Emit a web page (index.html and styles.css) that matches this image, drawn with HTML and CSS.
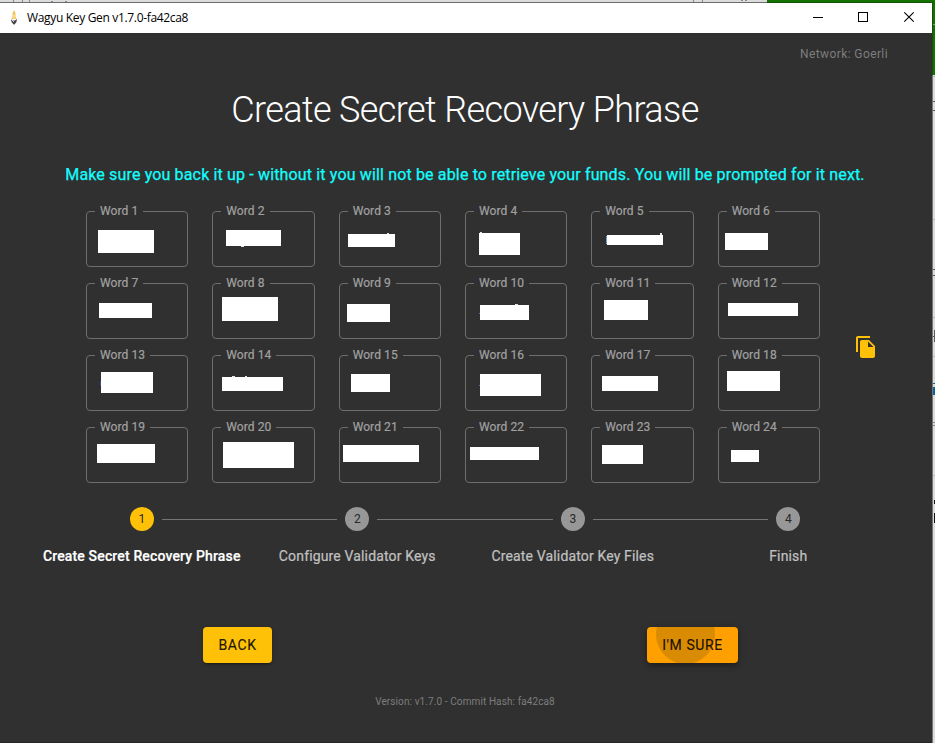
FILE: index.html
```html
<!DOCTYPE html>
<html lang="en">
<head>
<meta charset="utf-8">
<title>Wagyu Key Gen</title>
<link rel="stylesheet" href="styles.css">
</head>
<body>
<div class="desktop">
  <svg class="backdrop" width="935" height="743" viewBox="0 0 935 743" shape-rendering="crispEdges">
    <rect width="935" height="743" fill="#dcdcdc"/>
    <path d="M13.5 0v2M22.5 0v2M29.5 0v2M51 1.5h2M65 1.5h2M693.5 0v2M702.5 0v2M741 .5h2M745 .5h2" stroke="#888"/>
    <rect x="767" width="168" height="75" fill="#137200"/>
    <path d="M933 24.5h2" stroke="#72a965"/>
    <path d="M933 76.5h2M933 219.5h2M933 317.5h2M933 356.5h2M933 475.5h2" stroke="#bbb"/>
    <path d="M933 101.5h2M933 110.5h2M933 269.5h2M933 275.5h2M933 336.5h2M934.5 330v12" stroke="#555a60"/>
    <path d="M933 422.5h2M933 425.5h2" stroke="#888"/>
    <path d="M933 383.5h2" stroke="#0a639c"/><rect x="932" y="387" width="3" height="8" fill="#0a639c"/>
    <path d="M934.5 500v4M934.5 513v10" stroke="#111"/>
    <path d="M932.5 75v668" stroke="#777"/>
    <path d="M0 2.5h767" stroke="#6c6c6c"/><path d="M767 2.5h166M932.5 2v73" stroke="#145009"/>
  </svg>
  <div class="window">
    <header class="titlebar">
      <svg class="app-icon" width="8" height="16" viewBox="0 0 8 16">
        <path d="M4 0L5.500 3.500V7L6.500 9H1.500L2.500 7V3.500z" fill="#efbf4e"/>
        <path d="M4 4v5" stroke="#fff0b7"/>
        <path d="M.8 9L3.200 10.400H4.800L7.200 9L6.300 12.300L4.500 14.500H3.600L1.700 12.300z" fill="#444"/>
        <path d="M1.200 9.200L4 12" stroke="#ccc"/>
      </svg>
      <span class="app-name">Wagyu Key Gen v1.7.0-fa42ca8</span>
      <svg class="controls" width="102" height="12" viewBox="0 0 102 12" fill="none" stroke="#000">
        <path d="M0 6.500h10M45.500 1.500h9v9h-9z" shape-rendering="crispEdges"/>
        <path d="M91.300 1.300l9.400 9.400M100.700 1.300l-9.400 9.400" stroke-width="1.1"/>
      </svg>
    </header>
    <main class="app">
      <div class="network">Network: Goerli</div>
      <h1 class="title">Create Secret Recovery Phrase</h1>
      <p class="warning">Make sure you back it up - without it you will not be able to retrieve your funds. You will be prompted for it next.</p>
      <section class="phrase">
        <div class="words">
          <fieldset class="word"><legend>Word 1</legend><div class="mask m1"></div></fieldset>
          <fieldset class="word"><legend>Word 2</legend><div class="mask m2"></div></fieldset>
          <fieldset class="word"><legend>Word 3</legend><div class="mask m3"></div></fieldset>
          <fieldset class="word"><legend>Word 4</legend><div class="mask m4"></div></fieldset>
          <fieldset class="word"><legend>Word 5</legend><div class="mask m5"></div></fieldset>
          <fieldset class="word"><legend>Word 6</legend><div class="mask m6"></div></fieldset>
          <fieldset class="word"><legend>Word 7</legend><div class="mask m7"></div></fieldset>
          <fieldset class="word"><legend>Word 8</legend><div class="mask m8"></div></fieldset>
          <fieldset class="word"><legend>Word 9</legend><div class="mask m9"></div></fieldset>
          <fieldset class="word"><legend>Word 10</legend><div class="mask m10"></div></fieldset>
          <fieldset class="word"><legend>Word 11</legend><div class="mask m11"></div></fieldset>
          <fieldset class="word"><legend>Word 12</legend><div class="mask m12"></div></fieldset>
          <fieldset class="word"><legend>Word 13</legend><div class="mask m13"></div></fieldset>
          <fieldset class="word"><legend>Word 14</legend><div class="mask m14"></div></fieldset>
          <fieldset class="word"><legend>Word 15</legend><div class="mask m15"></div></fieldset>
          <fieldset class="word"><legend>Word 16</legend><div class="mask m16"></div></fieldset>
          <fieldset class="word"><legend>Word 17</legend><div class="mask m17"></div></fieldset>
          <fieldset class="word"><legend>Word 18</legend><div class="mask m18"></div></fieldset>
          <fieldset class="word"><legend>Word 19</legend><div class="mask m19"></div></fieldset>
          <fieldset class="word"><legend>Word 20</legend><div class="mask m20"></div></fieldset>
          <fieldset class="word"><legend>Word 21</legend><div class="mask m21"></div></fieldset>
          <fieldset class="word"><legend>Word 22</legend><div class="mask m22"></div></fieldset>
          <fieldset class="word"><legend>Word 23</legend><div class="mask m23"></div></fieldset>
          <fieldset class="word"><legend>Word 24</legend><div class="mask m24"></div></fieldset>
        </div>
        <svg class="copy" width="24" height="24" viewBox="0 0 24 24" fill="#ffc107"><path d="M16 1H4c-1.100 0-2 .9-2 2v14h2V3h12V1zm-1 4l6 6v10c0 1.100-.9 2-2 2H7.990C6.890 23 6 22.100 6 21l.010-14c0-1.100.890-2 1.990-2h7zm-1 7h5.500L14 6.500V12z"/></svg>
      </section>
      <ol class="stepper">
        <li class="step active"><span class="dot">1</span><span class="label">Create Secret Recovery Phrase</span></li>
        <li class="step"><span class="dot">2</span><span class="label">Configure Validator Keys</span></li>
        <li class="step"><span class="dot">3</span><span class="label">Create Validator Key Files</span></li>
        <li class="step"><span class="dot">4</span><span class="label">Finish</span></li>
      </ol>
      <div class="actions">
        <button class="btn back">BACK</button>
        <button class="btn sure"><span>I'M SURE</span></button>
      </div>
      <footer class="version">Version: v1.7.0 - Commit Hash: fa42ca8</footer>
    </main>
  </div>
</div>
</body>
</html>
```
FILE: styles.css
```css
* { box-sizing: border-box; }
body { margin: 0; overflow: hidden; font-family: Roboto, sans-serif; }
.desktop { position: relative; width: 935px; height: 743px; padding-top: 3px; }
.backdrop { position: absolute; top: 0; left: 0; }
.window { position: relative; width: 932px; height: 740px; background: #303030; border-bottom: 1px solid #252525; }

.titlebar { display: flex; align-items: center; height: 30px; padding: 0 17px 0 10px; background: #fff; }
.app-icon { margin-right: 9px; }
.app-name { flex: 1; margin-top: -1px; font: 12px "Open Sans", sans-serif; letter-spacing: -.33px; color: #000; }
.controls { margin-top: -2px; }

.app { display: flex; flex-direction: column; }
.network { align-self: flex-end; margin: 13px 44px 0 0; font-size: 12px; line-height: 16px; letter-spacing: .4px; color: #7d7d7d; }
.title { margin: 27px 0 0; padding-right: 2px; text-align: center; font-size: 36px; font-weight: 300; line-height: 42px; letter-spacing: -.6px; color: #fff; }
.warning { margin: 32px 0 0; padding-right: 2px; text-align: center; font-size: 16px; font-weight: 400; line-height: 24px; letter-spacing: .15px; color: #1ff; white-space: nowrap; -webkit-text-stroke: .25px; }

.phrase { display: flex; align-items: center; margin: 19px 0 0 86px; }
.words { display: grid; grid-template-columns: repeat(6, 1fr); gap: 11px 24px; width: 734px; }
.word { min-width: 0; height: 61px; margin: 0; padding: 0; border: 1px solid #6e6e6e; border-radius: 4px; }
.word legend { height: 11px; margin-left: 8px; padding: 0 5px; font-size: 12px; line-height: 11px; letter-spacing: .08px; color: #a0a0a0; -webkit-text-stroke: .2px; }
.copy { margin: 4px 0 0 34px; }

.mask { position: relative; background: #fff; }
.m1 { margin: 13px 0 0 11px; width: 56px; height: 23px; }
.m2 { margin: 13px 0 0 13px; width: 55px; height: 16px; }
.m3 { margin: 17px 0 0 8px; width: 47px; height: 13px; }
.m4 { margin: 16px 0 0 13px; width: 41px; height: 22px; }
.m5 { margin: 18px 0 0 15px; width: 56px; height: 10px; }
.m6 { margin: 16px 0 0 6px; width: 43px; height: 17px; }
.m7 { margin: 14px 0 0 12px; width: 53px; height: 15px; }
.m8 { margin: 8px 0 0 9px; width: 56px; height: 24px; }
.m9 { margin: 15px 0 0 7px; width: 43px; height: 18px; }
.m10 { margin: 16px 0 0 14px; width: 49px; height: 15px; }
.m11 { margin: 11px 0 0 12px; width: 44px; height: 20px; }
.m12 { margin: 14px 0 0 9px; width: 70px; height: 13px; }
.m13 { margin: 11px 0 0 14px; width: 52px; height: 21px; }
.m14 { margin: 16px 0 0 9px; width: 61px; height: 14px; }
.m15 { margin: 13px 0 0 11px; width: 39px; height: 18px; }
.m16 { margin: 13px 0 0 14px; width: 61px; height: 22px; }
.m17 { margin: 15px 0 0 10px; width: 56px; height: 15px; }
.m18 { margin: 10px 0 0 8px; width: 53px; height: 20px; }
.m19 { margin: 11px 0 0 10px; width: 58px; height: 19px; }
.m20 { margin: 9px 0 0 10px; width: 71px; height: 26px; }
.m21 { margin: 12px 0 0 3px; width: 76px; height: 17px; }
.m22 { margin: 14px 0 0 4px; width: 69px; height: 13px; }
.m23 { margin: 12px 0 0 10px; width: 41px; height: 19px; }
.m24 { margin: 17px 0 0 12px; width: 28px; height: 12px; }

/* slivers of the words that stick out past their masks */
.m2::before, .m3::before, .m4::before, .m5::before, .m5::after, .m10::before, .m10::after,
.m13::before, .m14::before, .m14::after, .m16::before { content: ""; position: absolute; width: 2px; height: 1px; background: #e4e4e4; }
.m2::before { left: 15px; bottom: -1px; width: 3px; }
.m3::before { right: 6px; top: -1px; }
.m4::before { left: 1px; top: -1px; }
.m5::before { left: -1px; top: 1px; width: 1px; height: 8px; background: #6f9cc4; }
.m5::after { right: 1px; top: -2px; height: 2px; }
.m10::before { left: -1px; top: 8px; width: 1px; background: #3c7fc0; }
.m10::after { right: 11px; top: -1px; width: 3px; }
.m13::before { left: -1px; top: 9px; width: 1px; height: 5px; background: #344f9c; }
.m14::before { left: 10px; top: -1px; width: 3px; }
.m14::after { left: 23px; top: -1px; }
.m16::before { left: -1px; top: 11px; width: 1px; background: #3c7fc0; }

.stepper { display: grid; grid-template-columns: repeat(4, 1fr); width: 862px; margin: 24px 0 0 34px; padding: 0; list-style: none; }
.step { position: relative; display: flex; flex-direction: column; align-items: center; }
.step + .step::before { content: ""; position: absolute; top: 12px; left: calc(-50% + 20px); right: calc(50% + 20px); height: 1px; background: #757575; }
.dot { width: 24px; height: 24px; border-radius: 50%; background: #979797; color: #262626; font-size: 12px; line-height: 24px; text-align: center; }
.label { margin-top: 15px; font-size: 14px; line-height: 20px; letter-spacing: .15px; color: #c1c1c1; white-space: nowrap; -webkit-text-stroke: .2px; }
.active .dot { background: #ffc107; }
.active .label { color: #fff; font-weight: 500; }

.actions { display: flex; justify-content: space-between; margin: 61px 194px 0 203px; }
.btn { height: 36px; padding: 0 0 1px; border: 0; border-radius: 4px; font: 400 14px/34px Roboto, sans-serif; letter-spacing: .58px; color: rgba(0,0,0,.87); -webkit-text-stroke: .2px; box-shadow: 0 3px 1px -2px rgba(0,0,0,.2), 0 2px 2px rgba(0,0,0,.14), 0 1px 5px rgba(0,0,0,.12); }
.back { width: 69px; background: #ffc107; }
.sure { position: relative; overflow: hidden; width: 91px; background: #ffa000; box-shadow: 0 2px 4px -1px rgba(0,0,0,.2), 0 4px 5px rgba(0,0,0,.14), 0 1px 10px rgba(0,0,0,.12); }
.sure::before { content: ""; position: absolute; left: 9px; top: -22px; width: 59px; height: 59px; border-radius: 50%; background: #d98b04; }
.sure span { position: relative; }
.version { margin-top: 32px; padding-right: 2px; text-align: center; font-size: 10px; line-height: 14px; letter-spacing: .1px; color: #7d7d7d; }
```
